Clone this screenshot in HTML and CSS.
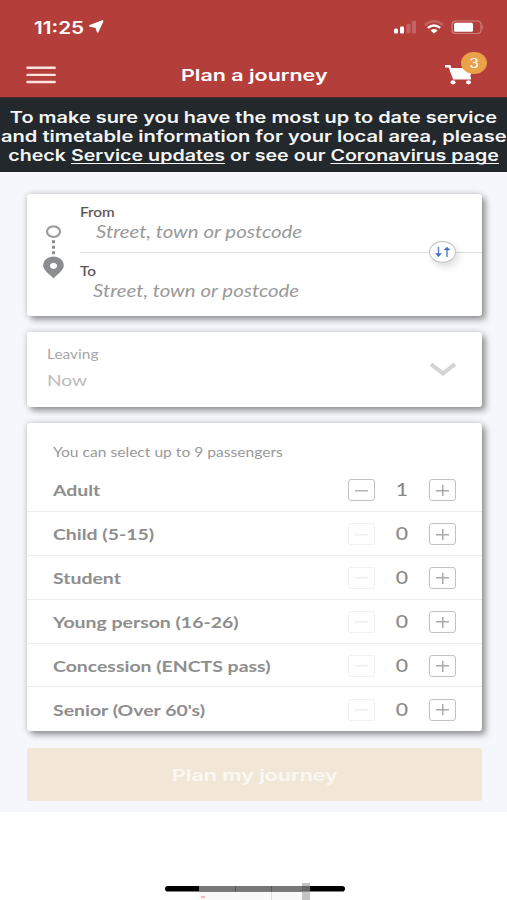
FILE: index.html
```html
<!DOCTYPE html>
<html lang="en">
<head>
<meta charset="utf-8">
<title>Plan a journey</title>
<link rel="stylesheet" href="styles.css">
</head>
<body>
<header class="top">
  <div class="status">
    <span class="clock">11:25</span>
    <svg class="locate" width="15" height="13" viewBox="0 0 15 13"><path d="M13.500 1.200 8.700 11.700 7.200 7.200 1 5.900Z" fill="#fff" stroke="#fff" stroke-width="1.800" stroke-linejoin="round"/></svg>
    <svg class="signal" width="24" height="14" viewBox="0 0 24 14"><g fill="#fff"><rect x="1" y="8.500" width="4" height="5" rx="1.500"/><rect x="7" y="6.500" width="4" height="7" rx="1.200"/><g opacity=".2"><rect x="13.500" y="4" width="4" height="9.500" rx="1"/><rect x="19" y="1" width="4" height="12.500" rx="1"/></g></g></svg>
    <svg class="wifi" width="20" height="14" viewBox="0 0 20 14"><g fill="none" stroke="#fff" stroke-width="2.300"><path d="M1 5Q10-2.500 19 5" opacity=".2"/><path d="M3.800 7.900Q10 3.100 16.200 7.900"/></g><path d="M6.500 10.400Q10 7.800 13.500 10.400L10 13.500Z" fill="#fff"/></svg>
    <svg class="battery" width="34" height="15" viewBox="0 0 34 15"><rect x="1" y="1" width="29" height="12.500" rx="3.500" fill="none" stroke="#fff" stroke-opacity=".35" stroke-width="1.200"/><rect x="3" y="2.800" width="19" height="9" rx="1.500" fill="#fff"/><path d="M31.300 4.500Q33.300 7.250 31.300 10Z" fill="#fff" opacity=".4"/></svg>
  </div>
  <nav class="bar">
    <svg class="menu" width="30" height="19" viewBox="0 0 30 19"><path d="M1.500 1.800H28.700M1.500 8.900H28.700M1.500 16H28.700" stroke="#fbe3e0" stroke-width="2.400" stroke-linecap="round"/></svg>
    <h1 class="title"><span class="w w-title">Plan a journey</span></h1>
    <div class="cart">
      <svg width="30" height="22" viewBox="0 0 30 22"><path d="M0 2.300H4.500L9 14.300H26" fill="none" stroke="#fff" stroke-width="2.400"/><path d="M4.500 4H27L25 14.500H8.500Z" fill="#fff"/><ellipse cx="8" cy="18.300" rx="2.500" ry="2.100" fill="#fff"/><ellipse cx="23.500" cy="18.300" rx="2.500" ry="2.100" fill="#fff"/></svg>
      <span class="badge"><span class="w w-badge">3</span></span>
    </div>
  </nav>
</header>
<section class="notice">
  <div class="w n1">To make sure you have the most up to date service</div>
  <div class="w n2">and timetable information for your local area, please</div>
  <div class="w n3">check <u>Service updates</u> or see our <u>Coronavirus page</u></div>
</section>
<main class="main">
  <section class="card route">
    <svg class="pins" width="22" height="56" viewBox="0 0 22 56"><ellipse cx="11.500" cy="7.700" rx="6.500" ry="5.300" fill="none" stroke="#999b9d" stroke-width="2.200"/><path d="M10 16.200h3v3h-3zM10 21.700h3v3h-3zM10 27.200h3v3h-3z" fill="#8b8e91"/><path fill-rule="evenodd" d="M11.500 32.500C17 32.500 21.800 36 21.800 41.500 21.800 46.500 15.500 50 11.500 54.500 7.500 50 1.200 46.500 1.200 41.500 1.200 36 6 32.500 11.500 32.500ZM11.500 38.700a3.600 3.100 0 1 0 .01 0Z" fill="#8b8e91"/></svg>
    <div class="fields">
      <div class="field from"><label class="w w-from">From</label><span class="w ph ph-from">Street, town or postcode</span></div>
      <div class="field to"><label class="w w-to">To</label><span class="w ph ph-to">Street, town or postcode</span></div>
    </div>
    <button class="swap"><svg width="18" height="12" viewBox="0 0 18 12"><g fill="none" stroke="#5b88cc" stroke-width="1.500"><path d="M4.500 .8V9.500M13 2V11"/></g><path d="M1 7.300H8L4.500 11ZM9.500 4.300H16.500L13 .8Z" fill="#4572c4"/></svg></button>
  </section>
  <section class="card leaving">
    <div class="when"><span class="w w-leaving">Leaving</span><span class="w w-now">Now</span></div>
    <svg class="chev" width="28" height="16" viewBox="0 0 28 16"><path d="M2 2.200 14 11.500 26 2.200" fill="none" stroke="#d4d4d4" stroke-width="4"/></svg>
  </section>
  <section class="card people">
    <p class="hint"><span class="w w-hint">You can select up to 9 passengers</span></p>
    <div class="row"><span class="w name">Adult</span><div class="step"><i class="b"></i><b class="w num">1</b><i class="b plus"></i></div></div>
    <div class="row"><span class="w name">Child (5-15)</span><div class="step"><i class="b off"></i><b class="w num">0</b><i class="b plus"></i></div></div>
    <div class="row"><span class="w name">Student</span><div class="step"><i class="b off"></i><b class="w num">0</b><i class="b plus"></i></div></div>
    <div class="row"><span class="w name">Young person (16-26)</span><div class="step"><i class="b off"></i><b class="w num">0</b><i class="b plus"></i></div></div>
    <div class="row"><span class="w name">Concession (ENCTS pass)</span><div class="step"><i class="b off"></i><b class="w num">0</b><i class="b plus"></i></div></div>
    <div class="row"><span class="w name">Senior (Over 60's)</span><div class="step"><i class="b off"></i><b class="w num">0</b><i class="b plus"></i></div></div>
  </section>
  <button class="go"><span class="w w-go">Plan my journey</span></button>
</main>
<footer class="foot">
  <svg width="182" height="18" viewBox="0 0 182 18"><rect x="1" y="4" width="180" height="5.600" rx="2.800" fill="#000"/><path d="M35 4H146V9.600H35Z" fill="#777"/><path d="M35 10H146V18H35Z" fill="#f9f9f9"/><path d="M71.500 4V9.600M107.500 4V9.600" stroke="#444" stroke-opacity=".6"/><path d="M107.500 10V18" stroke="#ddd"/><path d="M138 1h8v17h-8z" fill="#c4c4c4"/><path d="M138 4h8v5.600h-8z" fill="#666"/><path d="M37 14h4v2h-4z" fill="#f5b9bc"/></svg>
</footer>
</body>
</html>
```
FILE: styles.css
```css
* { box-sizing: border-box; }
body { margin: 0; width: 507px; height: 900px; overflow: hidden; background: #fff; font-family: Lato, "Open Sans", sans-serif; }
svg { display: block; flex: none; }
.w { display: block; width: max-content; white-space: nowrap; transform-origin: left center; transform: scaleX(var(--s, 1.2)); }

.top { height: 98px; background: #b43e3a; color: #fff; border-bottom: 1px solid #47292b; }
.status { display: flex; align-items: center; height: 54px; padding: 0 22px 0 34px; }
.clock { width: 55px; margin-top: 1px; font: 600 17px/20px Inter, sans-serif; transform-origin: left; transform: scaleX(1.22); }
.locate { margin-top: -1px; }
.signal { margin-left: auto; }
.wifi { margin-left: 7px; }
.battery { margin-left: 7px; }
.bar { display: grid; grid-template-columns: 60px 1fr 60px; align-items: center; height: 42px; padding: 0 0 0 26px; }
.title { margin: 0 0 0 95px; font: 600 16px/22px Inter, sans-serif; }
.w-title { --s: 1.34; }
.cart { position: relative; margin-left: -2px; }
.badge { position: absolute; left: 16px; top: -12px; width: 26px; height: 22px; border-radius: 50%; background: #eba147; display: grid; place-items: center; font: 13px/22px Inter, sans-serif; }
.w-badge { transform-origin: center; }

.notice { height: 74px; padding-top: 10px; background: #22282c; color: #f3f5f6; display: flex; flex-direction: column; align-items: center; font: 600 15.500px/19.200px Inter, sans-serif; }
.notice .w { transform-origin: center; }
.notice u { text-decoration-thickness: 1px; text-underline-offset: 2px; text-decoration-skip-ink: none; }
.n1 { --s: 1.286; }
.n2 { --s: 1.298; }
.n3 { --s: 1.267; }

.main { height: 640px; padding: 22px 25px 0 27px; background: #f6f7fc; display: flex; flex-direction: column; }
.card { background: #fff; border-radius: 3px; box-shadow: 4px 4px 6px rgba(0, 0, 0, .34), 0 0 6px rgba(0, 0, 0, .2); flex: none; }
.route { position: relative; height: 122px; display: flex; padding-left: 15px; }
.pins { margin-top: 30px; }
.fields { flex: 1; margin-left: 16px; }
.field { color: #555; font-size: 12.500px; line-height: 16px; }
.field label { --s: 1.23; -webkit-text-stroke: .2px #555; }
.from { height: 59px; padding-top: 11px; border-bottom: 1.500px solid #ddd; }
.to { padding-top: 11px; }
.ph { color: #999; font-size: 17px; font-style: italic; line-height: 22px; }
.ph-from { margin-left: 16px; }
.ph-to { margin-left: 13px; }
.swap { position: absolute; right: 26px; top: 47px; width: 27px; height: 22px; padding: 0; border: 1.500px solid #c2c4c2; border-radius: 50%; background: #fff; display: grid; place-items: center; box-shadow: 3px 4px 7px rgba(0, 0, 0, .12); }
.leaving { height: 75px; margin-top: 16px; padding: 13px 25px 0 20px; display: flex; justify-content: space-between; }
.w-leaving { --s: 1.19; color: #a6a6a6; font-size: 13px; line-height: 18px; }
.w-now { color: #bbb; font-size: 16px; line-height: 20px; margin-top: 7px; }
.chev { margin-top: 17px; }
.people { height: 308px; margin-top: 16px; }
.hint { height: 45px; margin: 0; padding: 19px 0 0 26px; color: #999; font-size: 13px; line-height: 20px; }
.row { display: flex; align-items: center; justify-content: space-between; height: 43.900px; padding: 2px 26px 0 26px; border-bottom: 1.500px solid #ececec; }
.row:last-child { border: 0; padding-top: 1px; }
.name { --s: 1.215; color: #8e8e8e; font-size: 16px; font-weight: 700; line-height: 20px; }
.step { display: grid; grid-template-columns: 27px 54px 27px; align-items: center; justify-items: center; }
.num { color: #888; font: 500 17px/20px Lato, sans-serif; transform-origin: center; --s: 1.25; }
.b { width: 27px; height: 22px; border: 1.500px solid #c2c2c2; border-radius: 3px; background: linear-gradient(#b4b4b4, #b4b4b4) center / 13px 1.500px no-repeat; }
.plus { background: linear-gradient(#aaa, #aaa) center / 13px 1.500px no-repeat, linear-gradient(#aaa, #aaa) center / 1.500px 11px no-repeat; }
.off { opacity: .22; }
.go { flex: none; height: 53px; margin-top: 17px; padding: 0; border: 0; border-radius: 2px; background: #f2e7d7; color: #fbf8f4; display: grid; place-items: center; font: 600 16px/22px Inter, sans-serif; }
.w-go { --s: 1.34; transform-origin: center; }
.foot { height: 88px; display: flex; justify-content: center; align-items: flex-end; padding-left: 2px; }
```
